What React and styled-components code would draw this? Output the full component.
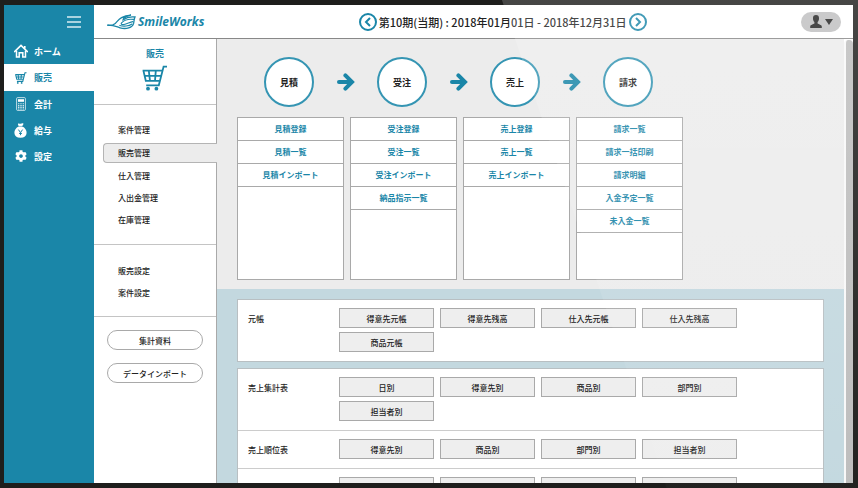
import React, { useState } from "react";
import styled, { createGlobalStyle } from "styled-components";
import { FaCog } from "react-icons/fa";

const GlobalStyle = createGlobalStyle`
  *, *::before, *::after {
    box-sizing: border-box;
  }
  body, html {
    margin: 0;
    padding: 0;
    overflow: hidden;
  }
  body {
    font-family: "Noto Sans CJK JP", sans-serif;
    font-size: 8px;
    font-weight: 500;
    color: #222;
  }
  button {
    font: inherit;
    color: inherit;
    padding: 0;
    cursor: pointer;
  }
  a {
    color: inherit;
    text-decoration: none;
  }
  ul {
    list-style: none;
    margin: 0;
    padding: 0;
  }
  svg {
    display: block;
    flex-shrink: 0;
  }
`;

const blue = "#1a86a8";
const line = "#a9a9a9";

const CartIcon = ({ size, stroke = 1.8 }) => (
  <svg width={size} height={size} viewBox="0 0 26 26" fill="none" stroke="currentColor" strokeWidth={stroke}>
    <path d="M25 1.6H21.6L16.8 20.3H4.2" />
    <path d="M0.6 5.6H20.2M1.4 5.6L3.8 15.8H17.6M2.4 10.8H19" />
    <path d="M6.8 5.6L8 15.8M13.8 5.6L13 15.8" />
    <circle cx="6" cy="23.7" r="1.9" fill="currentColor" stroke="none" />
    <circle cx="14.4" cy="23.7" r="1.9" fill="currentColor" stroke="none" />
  </svg>
);

const HomeIcon = () => (
  <svg width="14" height="14" viewBox="0 0 14 14" fill="none" stroke="currentColor" strokeWidth="1.5">
    <path d="M0.6 7.6L7 1.4L13.4 7.6" strokeLinecap="round" />
    <path d="M2.5 6.7V13H5.2V8.8H8.8V13H11.5V6.7" />
    <path d="M10.8 2V4.6" strokeWidth="1.6" />
  </svg>
);

const CalculatorIcon = () => (
  <svg width="10" height="14" viewBox="0 0 10 14" fill="none" stroke="currentColor">
    <rect x="0.6" y="0.6" width="8.8" height="12.8" rx="1" strokeWidth="0.9" opacity="0.8" />
    <rect x="2" y="2.2" width="6" height="2.6" fill="currentColor" stroke="none" />
    <path d="M2 6.8H8M2 8.6H8M2 10.4H8M2 12H8" strokeWidth="1.1" strokeDasharray="1.4 0.9" opacity="0.8" />
  </svg>
);

const MoneyBagIcon = () => (
  <svg width="13" height="15" viewBox="0 0 13 15">
    <path
      fill="currentColor"
      d="M4 0.8C5 0 5.8 1 6.6 0.8C7.6 0.4 8.6 0 9.4 0.6C9.6 1.6 8.6 2.4 8.2 3.4C11 4.6 12.8 7 12.6 10C12.4 13 10.4 14.8 6.5 14.8C2.6 14.8 0.6 13 0.4 10C0.2 7 2 4.6 4.8 3.4C4.6 2.4 3.6 1.6 4 0.8Z"
    />
    <path d="M4.4 3.4H9.4" stroke={blue} strokeWidth="0.5" />
    <path d="M4.4 6.6L6.5 9.6L8.6 6.6M6.5 9.6V12.2M5 10.4H8" fill="none" stroke={blue} strokeWidth="1" />
  </svg>
);

const LeafMark = () => (
  <svg width="29" height="16" viewBox="0 0 29 16" fill="none" stroke={blue} strokeWidth="1.3" strokeLinecap="round">
    <path d="M0.8 11.2C3.4 11.8 6 11.2 8.2 9.4C11.2 6.6 13.6 1.8 24 1.2C21.6 1.6 18.6 2.6 16.4 4.8" />
    <path d="M0.8 11.2C6.8 11 9.2 12.6 13 13.8C19 15.6 25.6 13.8 26.6 9.4C27 7 27.2 4.6 28 3C25.4 2.6 20 3 15.8 6" />
    <path d="M26.8 5.4C22.6 4.8 17.4 6 14.8 8.6C13 10.6 15.6 11 18 10.2C20.8 9.4 23.4 8 25.8 7.6" strokeWidth="1.1" />
    <path d="M12.8 11.4C16.4 12.8 22 12.2 25 10" strokeWidth="1.1" />
  </svg>
);

const Chevron = ({ flip }) => (
  <svg width="8" height="10" viewBox="0 0 8 10" fill="none" stroke={blue} strokeWidth="2">
    <path d={flip ? "M2 1L6 5L2 9" : "M6 1L2 5L6 9"} />
  </svg>
);

const FlowArrow = () => (
  <svg width="18" height="18" viewBox="0 0 18 18" fill="none" stroke={blue} strokeWidth="4">
    <path d="M2 9H14" strokeLinecap="round" />
    <path d="M8.4 2.4L15 9L8.4 15.6" strokeLinecap="round" />
  </svg>
);

const UserIcon = () => (
  <svg width="12" height="13" viewBox="0 0 12 13" fill="#222">
    <path d="M6 0C8 0 9.2 1.2 9 3.4C9 5 8.4 6.2 7.6 7V8.4C8.6 9.4 11.6 9.4 11.8 11.4V13H0.2V11.4C0.4 9.4 3.4 9.4 4.4 8.4V7C3.6 6.2 3 5 3 3.4C2.8 1.2 4 0 6 0Z" />
  </svg>
);

const mainMenu = [
  { label: "ホーム", icon: <HomeIcon /> },
  { label: "販売", icon: <CartIcon size={12} stroke={2.4} /> },
  { label: "会計", icon: <CalculatorIcon /> },
  { label: "給与", icon: <MoneyBagIcon /> },
  { label: "設定", icon: <FaCog size={12} /> },
];

const subMenu = ["案件管理", "販売管理", "仕入管理", "入出金管理", "在庫管理"];
const settingsMenu = ["販売設定", "案件設定"];

const flow = [
  { title: "見積", links: ["見積登録", "見積一覧", "見積インポート"] },
  { title: "受注", links: ["受注登録", "受注一覧", "受注インポート", "納品指示一覧"] },
  { title: "売上", links: ["売上登録", "売上一覧", "売上インポート"] },
  { title: "請求", links: ["請求一覧", "請求一括印刷", "請求明細", "入金予定一覧", "未入金一覧"] },
];

const reports = [
  [{ label: "元帳", items: ["得意先元帳", "得意先残高", "仕入先元帳", "仕入先残高", "商品元帳"] }],
  [
    { label: "売上集計表", items: ["日別", "得意先別", "商品別", "部門別", "担当者別"] },
    { label: "売上順位表", items: ["得意先別", "商品別", "部門別", "担当者別"] },
    { label: "", items: ["", "", "", ""] },
  ],
];

const App = () => {
  const [section, setSection] = useState("販売");
  const [page, setPage] = useState("販売管理");

  return (
    <Frame>
      <GlobalStyle />
      <Sidebar>
        <MenuToggle aria-label="メニュー">
          <span />
          <span />
          <span />
        </MenuToggle>
        {mainMenu.map(({ label, icon }) => (
          <MainLink key={label} href="#" $active={label === section} onClick={() => setSection(label)}>
            <IconSlot>{icon}</IconSlot>
            {label}
          </MainLink>
        ))}
      </Sidebar>

      <Body>
        <Header>
          <Logo href="#">
            <LeafMark />
            SmileWorks
          </Logo>
          <Period>
            <RoundButton aria-label="前の期">
              <Chevron />
            </RoundButton>
            <span>第10期(当期) : 2018年01月01日 - 2018年12月31日</span>
            <RoundButton aria-label="次の期">
              <Chevron flip />
            </RoundButton>
          </Period>
          <UserButton aria-label="ユーザー">
            <UserIcon />
            <Caret />
          </UserButton>
        </Header>

        <Columns>
          <SubNav>
            <SubTitle>
              販売
              <CartIcon size={26} />
            </SubTitle>
            <SubList $tall>
              {subMenu.map((label) => (
                <SubItem key={label} $active={label === page}>
                  <a href="#" onClick={() => setPage(label)}>
                    {label}
                  </a>
                </SubItem>
              ))}
            </SubList>
            <SubList>
              {settingsMenu.map((label) => (
                <SubItem key={label}>
                  <a href="#">{label}</a>
                </SubItem>
              ))}
            </SubList>
            <PillGroup>
              <Pill>集計資料</Pill>
              <Pill>データインポート</Pill>
            </PillGroup>
          </SubNav>

          <Main>
            <Workflow>
              <Steps>
                {flow.map(({ title }, i) => (
                  <React.Fragment key={title}>
                    {i > 0 && (
                      <ArrowSlot>
                        <FlowArrow />
                      </ArrowSlot>
                    )}
                    <Step>{title}</Step>
                  </React.Fragment>
                ))}
              </Steps>
              <Lists>
                {flow.map(({ title, links }) => (
                  <LinkList key={title}>
                    {links.map((link) => (
                      <li key={link}>
                        <a href="#">{link}</a>
                      </li>
                    ))}
                  </LinkList>
                ))}
              </Lists>
            </Workflow>
            <Reports>
              {reports.map((rows, i) => (
                <Panel key={i}>
                  {rows.map(({ label, items }, row) => (
                    <ReportRow key={row}>
                      <ReportLabel>{label}</ReportLabel>
                      <Chips>
                        {items.map((item, n) => (
                          <Chip key={n}>{item}</Chip>
                        ))}
                      </Chips>
                    </ReportRow>
                  ))}
                </Panel>
              ))}
            </Reports>
          </Main>
          <Scrollbar />
        </Columns>
      </Body>
      <Glare />
    </Frame>
  );
};

const Frame = styled.div`
  position: relative;
  display: flex;
  height: 100vh;
  padding: 5px 5px 5px 4px;
  background: #1e1e1c;
`;

/* light reflection across the right of the display */
const Glare = styled.div`
  position: absolute;
  inset: 0;
  pointer-events: none;
  clip-path: polygon(58.5% 0, 100% 0, 100% 100%, 77.7% 100%);
  background: linear-gradient(to bottom, rgba(255, 255, 255, 0.18), rgba(255, 255, 255, 0.02));
`;

const Sidebar = styled.nav`
  display: flex;
  flex-direction: column;
  width: 90px;
  flex-shrink: 0;
  background: ${blue};
`;

const MenuToggle = styled.button`
  display: flex;
  flex-direction: column;
  align-self: flex-end;
  justify-content: center;
  gap: 3px;
  width: 14px;
  height: 33px;
  margin-right: 13px;
  border: 0;
  background: none;
  span {
    height: 2px;
    background: #a9d3e0;
  }
`;

const MainLink = styled.a`
  display: flex;
  align-items: center;
  gap: 6px;
  height: ${(p) => (p.$active ? 27 : 26)}px;
  padding-left: 9px;
  font-size: 9px;
  font-weight: 700;
  color: ${(p) => (p.$active ? blue : "#fff")};
  background: ${(p) => (p.$active ? "#fff" : "none")};
`;

const IconSlot = styled.span`
  display: flex;
  justify-content: center;
  width: 15px;
`;

const Body = styled.div`
  display: flex;
  flex-direction: column;
  flex: 1;
  min-width: 0;
  background: #fff;
`;

const Header = styled.header`
  display: flex;
  align-items: center;
  justify-content: space-between;
  height: 34px;
  flex-shrink: 0;
  padding: 0 12px 0 13px;
  border-bottom: 1px solid #888;
`;

const Logo = styled.a`
  display: flex;
  align-items: center;
  gap: 2px;
  font-family: "Open Sans", sans-serif;
  font-size: 12px;
  font-style: italic;
  font-weight: 700;
  color: ${blue};
`;

const Period = styled.div`
  display: flex;
  align-items: center;
  gap: 2px;
  font-size: 11px;
  white-space: nowrap;
`;

const RoundButton = styled.button`
  display: flex;
  align-items: center;
  justify-content: center;
  width: 18px;
  height: 18px;
  border: 2px solid ${blue};
  border-radius: 50%;
  background: #fff;
`;

const UserButton = styled.button`
  display: flex;
  align-items: center;
  justify-content: center;
  gap: 3px;
  width: 40px;
  height: 20px;
  border: 0;
  border-radius: 10px;
  background: #bfbfc0;
`;

const Caret = styled.span`
  border: 4px solid transparent;
  border-top: 6px solid #222;
  border-bottom: 0;
`;

const Columns = styled.div`
  display: flex;
  flex: 1;
  min-height: 0;
`;

const SubNav = styled.aside`
  width: 123px;
  flex-shrink: 0;
  border-right: 1px solid ${line};
`;

const SubTitle = styled.div`
  display: flex;
  flex-direction: column;
  align-items: center;
  gap: 4px;
  height: 66px;
  padding-top: 8px;
  border-bottom: 1px solid #c4c4c4;
  font-size: 9px;
  font-weight: 700;
  line-height: 14px;
  color: ${blue};
`;

const SubList = styled.ul`
  padding: ${(p) => (p.$tall ? "14px 0 13px" : "15px 0 12px")};
  border-bottom: 1px solid #c4c4c4;
`;

const SubItem = styled.li`
  height: 22px;
  padding-left: 24px;
  line-height: 22px;
  ${(p) =>
    p.$active &&
    `
    height: 20px;
    margin: 2px -1px 2px 9px;
    padding-left: 14px;
    line-height: 18px;
    border: 1px solid #b4b4b4;
    border-right: 0;
    border-radius: 4px 0 0 4px;
    background: #ececec;
  `}
`;

const PillGroup = styled.div`
  display: flex;
  flex-direction: column;
  gap: 13px;
  padding: 13px;
`;

const Pill = styled.button`
  height: 20px;
  border: 1px solid ${line};
  border-radius: 10px;
  background: #fff;
`;

const Main = styled.main`
  flex: 1;
  min-width: 0;
  overflow: hidden;
  background: #ececec;
`;

const Workflow = styled.section`
  padding: 18px 20px 9px;
`;

const Steps = styled.div`
  display: flex;
  align-items: center;
  padding-left: 27px;
`;

const Step = styled.div`
  display: flex;
  align-items: center;
  justify-content: center;
  width: 50px;
  height: 50px;
  border: 2px solid #3595b3;
  border-radius: 50%;
  background: #fff;
  font-size: 9px;
  font-weight: 700;
`;

const ArrowSlot = styled.div`
  display: flex;
  justify-content: center;
  width: 63px;
`;

const Lists = styled.div`
  display: grid;
  grid-template-columns: repeat(4, 107px);
  gap: 6px;
  margin-top: 10px;
`;

const LinkList = styled.ul`
  height: 163px;
  border: 1px solid ${line};
  background: #fff;
  font-weight: 700;
  text-align: center;
  color: ${blue};
  li {
    height: 23px;
    line-height: 22px;
    border-bottom: 1px solid ${line};
  }
`;

const Reports = styled.section`
  display: flex;
  flex-direction: column;
  gap: 6px;
  padding: 10px 20px;
  background: #c3d8df;
`;

const Panel = styled.div`
  border: 1px solid #b8bfc2;
  background: #fff;
`;

const ReportRow = styled.div`
  display: flex;
  padding: 8px 10px 9px;
  & + & {
    border-top: 1px solid #ccc;
  }
`;

const ReportLabel = styled.div`
  width: 91px;
  flex-shrink: 0;
  padding-top: 2px;
  line-height: 18px;
`;

const Chips = styled.div`
  display: grid;
  grid-template-columns: repeat(4, 95px);
  gap: 4px 6px;
`;

const Chip = styled.button`
  height: 20px;
  border: 1px solid ${line};
  background: #eee;
`;

const Scrollbar = styled.div`
  width: 9px;
  flex-shrink: 0;
  margin-top: 1px;
  border-left: 2px solid #f8f8f8;
  border-radius: 4px 4px 0 0;
  background: #bdbdbd;
`;

export default App;
